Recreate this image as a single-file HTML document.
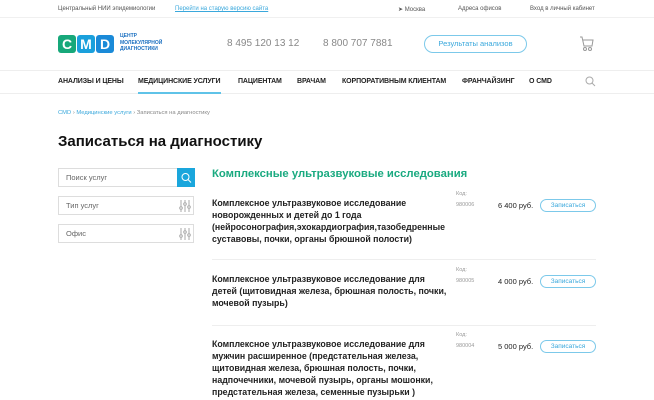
<!DOCTYPE html><html><head><meta charset="utf-8"><style>
body{margin:0;width:654px;height:400px;overflow:hidden;background:#fff;font-family:"Liberation Sans",sans-serif;color:#222;position:relative}
.a{position:absolute;white-space:nowrap}
.s{font-size:6px;color:#555}
.nav{font-size:7px;font-weight:bold;color:#222;top:78px;letter-spacing:-0.1px}
.box{position:absolute;left:58px;width:136px;height:19px;border:1px solid #ddd;box-sizing:border-box;font-size:7.5px;color:#666;line-height:18px;padding-left:7px}
.it{position:absolute;left:212px;font-size:8.8px;font-weight:bold;line-height:12px;color:#222;width:240px}
.code{font-size:5.5px;color:#999}
.price{font-size:7.5px;color:#222}
.btn{position:absolute;left:540px;width:56px;height:13px;border:1px solid #7cc9ea;border-radius:8px;box-sizing:border-box;font-size:6.5px;color:#3aa8dc;text-align:center;line-height:11px}
.hr{position:absolute;left:212px;width:384px;height:1px;background:#eee}
</style></head><body>
<div class="a s" style="left:58px;top:6px">Центральный НИИ эпидемиологии</div>
<div class="a s" style="left:175px;top:6px;color:#3aa8dc;text-decoration:underline">Перейти на старую версию сайта</div>
<div class="a s" style="left:398px;top:6px">➤ Москва</div>
<div class="a s" style="left:458px;top:6px">Адреса офисов</div>
<div class="a s" style="left:530px;top:6px">Вход в личный кабинет</div>
<div class="a" style="left:0;top:17px;width:654px;height:1px;background:#f0f0f0"></div>
<div class="a" style="left:58px;top:35px;width:18px;height:18px;background:#17a87a;border-radius:3px;color:#fff;font-weight:bold;font-size:14px;text-align:center;line-height:18px">C</div>
<div class="a" style="left:77px;top:35px;width:18px;height:18px;background:#1aa0dc;border-radius:3px;color:#fff;font-weight:bold;font-size:14px;text-align:center;line-height:18px">M</div>
<div class="a" style="left:96px;top:35px;width:18px;height:18px;background:#1a8ad8;border-radius:3px;color:#fff;font-weight:bold;font-size:14px;text-align:center;line-height:18px">D</div>
<div class="a" style="left:120px;top:33px;font-size:5px;font-weight:bold;color:#1a6fc0;line-height:6.5px">ЦЕНТР<br>МОЛЕКУЛЯРНОЙ<br>ДИАГНОСТИКИ</div>
<div class="a" style="left:227px;top:38px;font-size:10px;color:#888">8 495 120 13 12</div>
<div class="a" style="left:323px;top:38px;font-size:10px;color:#888">8 800 707 7881</div>
<div class="a" style="left:424px;top:35px;width:103px;height:18px;border:1px solid #7cc9ea;border-radius:10px;box-sizing:border-box;font-size:7.5px;color:#3aa8dc;text-align:center;line-height:16px">Результаты анализов</div>
<svg class="a" style="left:579px;top:36px" width="15" height="16" viewBox="0 0 15 16" fill="none" stroke="#999" stroke-width="1"><path d="M1 1h2l2 9h8l1-6H4"/><circle cx="6" cy="13" r="1.5"/><circle cx="11" cy="13" r="1.5"/></svg>
<div class="a" style="left:0;top:70px;width:654px;height:1px;background:#eee"></div>
<div class="a nav" style="left:58px">АНАЛИЗЫ И ЦЕНЫ</div>
<div class="a nav" style="left:138px">МЕДИЦИНСКИЕ УСЛУГИ</div>
<div class="a nav" style="left:238px">ПАЦИЕНТАМ</div>
<div class="a nav" style="left:297px">ВРАЧАМ</div>
<div class="a nav" style="left:342px">КОРПОРАТИВНЫМ КЛИЕНТАМ</div>
<div class="a nav" style="left:462px">ФРАНЧАЙЗИНГ</div>
<div class="a nav" style="left:529px">О CMD</div>
<svg class="a" style="left:585px;top:76px" width="11" height="11" viewBox="0 0 11 11" fill="none" stroke="#aaa"><circle cx="4.5" cy="4.5" r="3.5"/><path d="M7 7l3 3"/></svg>
<div class="a" style="left:0;top:93px;width:654px;height:1px;background:#eee"></div>
<div class="a" style="left:138px;top:92px;width:83px;height:2px;background:#5fc3e8"></div>
<div class="a" style="left:58px;top:110px;font-size:5.8px;color:#888"><span style="color:#3aa8dc">CMD</span> › <span style="color:#3aa8dc">Медицинские услуги</span> › Записаться на диагностику</div>
<div class="a" style="left:58px;top:133px;font-size:15px;font-weight:bold;color:#111">Записаться на диагностику</div>
<div class="box" style="top:168px">Поиск услуг</div>
<div class="a" style="left:177px;top:168px;width:18px;height:19px;background:#1aa6dc"><svg width="18" height="19" viewBox="0 0 18 19" fill="none" stroke="#fff"><circle cx="8.5" cy="9" r="3.5"/><path d="M11 11.5l3 3"/></svg></div>
<div class="box" style="top:196px">Тип услуг</div>
<div class="box" style="top:224px">Офис</div>
<svg class="a" style="left:179px;top:200px" width="12" height="12" viewBox="0 0 12 12" stroke="#aaa" fill="#fff"><path d="M2 0v12M6 0v12M10 0v12"/><circle cx="2" cy="8" r="1.3"/><circle cx="6" cy="4" r="1.3"/><circle cx="10" cy="7" r="1.3"/></svg>
<svg class="a" style="left:179px;top:228px" width="12" height="12" viewBox="0 0 12 12" stroke="#aaa" fill="#fff"><path d="M2 0v12M6 0v12M10 0v12"/><circle cx="2" cy="8" r="1.3"/><circle cx="6" cy="4" r="1.3"/><circle cx="10" cy="7" r="1.3"/></svg>
<div class="a" style="left:212px;top:168px;font-size:11.3px;font-weight:bold;color:#1aaa80">Комплексные ультразвуковые исследования</div>
<div class="it" style="top:197px">Комплексное ультразвуковое исследование<br>новорожденных и детей до 1 года<br>(нейросонография,эхокардиография,тазобедренные<br>суставовы, почки, органы брюшной полости)</div>
<div class="a code" style="left:456px;top:191px">Код:</div><div class="a code" style="left:456px;top:202px">980006</div>
<div class="a price" style="left:498px;top:201px">6 400 руб.</div>
<div class="btn" style="top:199px">Записаться</div>
<div class="hr" style="top:259px"></div>
<div class="it" style="top:273px">Комплексное ультразвуковое исследование для<br>детей (щитовидная железа, брюшная полость, почки,<br>мочевой пузырь)</div>
<div class="a code" style="left:456px;top:267px">Код:</div><div class="a code" style="left:456px;top:278px">980005</div>
<div class="a price" style="left:498px;top:277px">4 000 руб.</div>
<div class="btn" style="top:275px">Записаться</div>
<div class="hr" style="top:325px"></div>
<div class="it" style="top:338px">Комплексное ультразвуковое исследование для<br>мужчин расширенное (предстательная железа,<br>щитовидная железа, брюшная полость, почки,<br>надпочечники, мочевой пузырь, органы мошонки,<br>предстательная железа, семенные пузырьки )</div>
<div class="a code" style="left:456px;top:332px">Код:</div><div class="a code" style="left:456px;top:343px">980004</div>
<div class="a price" style="left:498px;top:342px">5 000 руб.</div>
<div class="btn" style="top:340px">Записаться</div>
</body></html>
